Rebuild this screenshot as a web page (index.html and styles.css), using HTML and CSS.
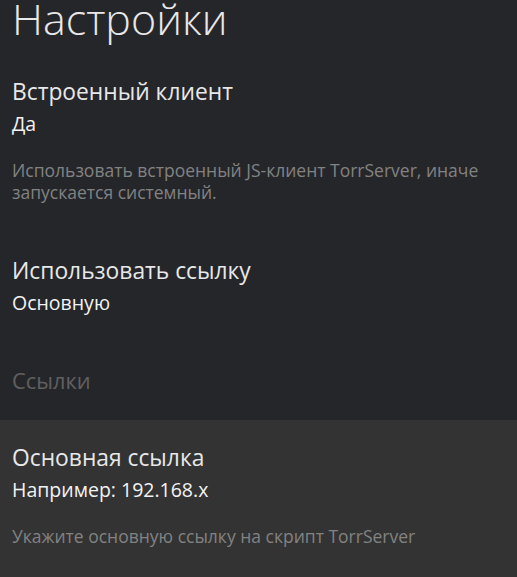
FILE: index.html
```html
<!DOCTYPE html>
<html lang="ru">
<head>
  <meta charset="UTF-8">
  <meta name="viewport" content="width=device-width, initial-scale=1.0">
  <title>Настройки</title>
  <link rel="stylesheet" href="styles.css">
</head>
<body>
  <div class="page">
    <h1 class="title">Настройки</h1>

    <div class="item">
      <div class="item-name">Встроенный клиент</div>
      <div class="item-value">Да</div>
      <div class="item-descr">Использовать встроенный JS-клиент TorrServer, иначе запускается системный.</div>
    </div>

    <div class="item">
      <div class="item-name">Использовать ссылку</div>
      <div class="item-value">Основную</div>
    </div>

    <div class="group-title">Ссылки</div>

    <div class="item focus">
      <div class="item-name">Основная ссылка</div>
      <div class="item-value">Например: 192.168.x</div>
      <div class="item-descr">Укажите основную ссылку на скрипт TorrServer</div>
    </div>
  </div>
</body>
</html>
```

FILE: styles.css
```css
html, body {
  margin: 0;
  height: 100%;
  background-color: #25262a;
}
body {
  font-family: "Open Sans", "Noto Sans", sans-serif;
  color: #e8e8e8;
  overflow: hidden;
}
.page {
  display: flex;
  flex-direction: column;
}
.title {
  margin: 0 0 5px 0;
  padding: 0 12px;
  font-size: 43px;
  font-weight: 300;
  line-height: 38px;
}
.item {
  padding: 34px 12px 19px 12px;
}
.item-name {
  font-size: 22.8px;
  line-height: 30px;
}
.item-value {
  margin-top: 4px;
  font-size: 19.5px;
  line-height: 26px;
  color: #f2f2f2;
}
.item-descr {
  margin-top: 22px;
  color: #828282;
  font-size: 17.5px;
  line-height: 22px;
}
.group-title {
  padding: 32px 12px 25px 12px;
  color: #606060;
  font-size: 21.8px;
  line-height: 28px;
}
.focus {
  padding-top: 23px;
  padding-bottom: 30px;
  background-color: #333333;
}
```
